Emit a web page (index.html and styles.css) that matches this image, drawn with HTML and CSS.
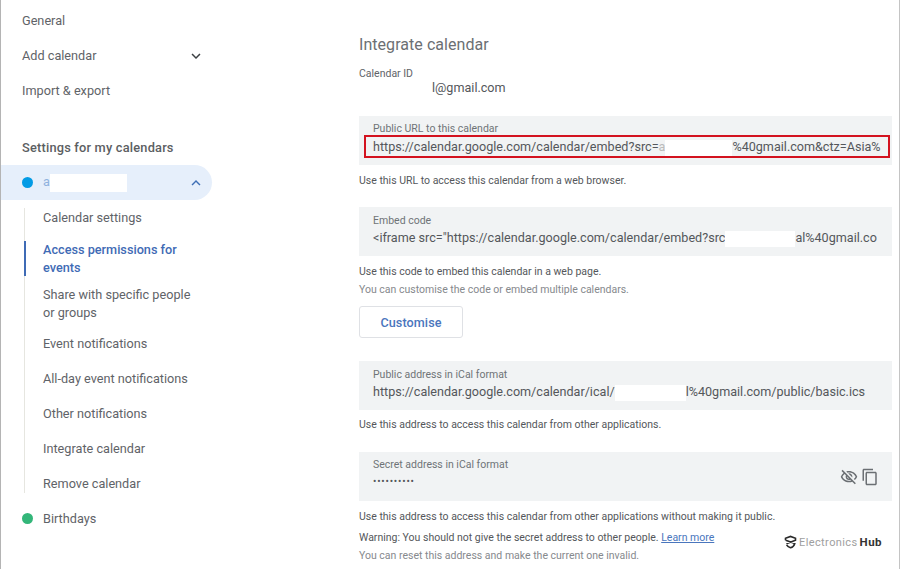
FILE: index.html
```html
<!DOCTYPE html>
<html lang="en">

<head>
    <meta charset="UTF-8">
    <title>Integrate calendar</title>
    <link rel="stylesheet" href="styles.css">
</head>

<body>
    <div id="box">
        <div class="side">
            <ul class="menu">
                <li>General</li>
                <li class="has_arrow">Add calendar
                    <svg class="arrow" viewBox="0 0 24 24"><path d="M7.4 8.6 12 13.2l4.6-4.6L18 10l-6 6-6-6z"/></svg>
                </li>
                <li>Import &amp; export</li>
            </ul>
            <p class="side_title">Settings for my calendars</p>
            <div class="cal_pill">
                <i class="dot blue"></i>
                <span class="cal_name">a<span class="hide hide_name"></span></span>
                <svg class="arrow up" viewBox="0 0 24 24"><path d="M7.4 15.4 12 10.8l4.6 4.6L18 14l-6-6-6 6z"/></svg>
            </div>
            <ul class="sub">
                <li>Calendar settings</li>
                <li class="two active">Access permissions for events</li>
                <li class="two">Share with specific people or groups</li>
                <li>Event notifications</li>
                <li>All-day event notifications</li>
                <li>Other notifications</li>
                <li>Integrate calendar</li>
                <li>Remove calendar</li>
            </ul>
            <div class="cal_row"><i class="dot green"></i><span>Birthdays</span></div>
        </div>

        <div class="main">
            <h2>Integrate calendar</h2>
            <p class="id_label">Calendar ID</p>
            <p class="id_value"><span class="hide hide_id"></span>l@gmail.com</p>

            <div class="field first">
                <p class="label">Public URL to this calendar</p>
                <p class="value marked">https://calendar.google.com/calendar/embed?src=<span class="fade">a</span><span class="hide hide_url"></span>%40gmail.com&amp;ctz=Asia%</p>
            </div>
            <p class="help">Use this URL to access this calendar from a web browser.</p>

            <div class="field">
                <p class="label">Embed code</p>
                <p class="value">&lt;iframe src="https://calendar.google.com/calendar/embed?src<span class="hide hide_embed"></span>al%40gmail.co</p>
            </div>
            <p class="help">Use this code to embed this calendar in a web page.</p>
            <p class="help grey">You can customise the code or embed multiple calendars.</p>
            <button class="btn">Customise</button>

            <div class="field ical">
                <p class="label">Public address in iCal format</p>
                <p class="value">https://calendar.google.com/calendar/ical/<span class="hide hide_ical"></span>l%40gmail.com/public/basic.ics</p>
            </div>
            <p class="help ical_help">Use this address to access this calendar from other applications.</p>

            <div class="field secret">
                <div class="secret_text">
                    <p class="label">Secret address in iCal format</p>
                    <p class="value dots">••••••••••</p>
                </div>
                <div class="tools">
                    <svg viewBox="0 0 24 24"><path d="M12 6c3.79 0 7.17 2.13 8.82 5.5-.59 1.22-1.42 2.27-2.41 3.12l1.41 1.41c1.39-1.23 2.49-2.77 3.18-4.53C21.27 7.11 17 4 12 4c-1.27 0-2.49.2-3.64.57l1.65 1.65C10.66 6.09 11.32 6 12 6zm-1.07 1.14L13 9.21c.57.25 1.03.71 1.28 1.28l2.07 2.07c.08-.34.14-.7.14-1.07C16.5 9.01 14.48 7 12 7c-.37 0-.72.05-1.07.14zM2.01 3.87l2.68 2.68C3.06 7.83 1.77 9.53 1 11.5 2.73 15.89 7 19 12 19c1.52 0 2.98-.29 4.32-.82l3.42 3.42 1.41-1.41L3.42 2.45 2.01 3.87zm7.5 7.5l2.61 2.61c-.04.01-.08.02-.12.02-1.38 0-2.5-1.12-2.5-2.5 0-.05.01-.08.01-.13zm-3.4-3.4l1.75 1.75c-.23.55-.36 1.15-.36 1.78 0 2.48 2.02 4.5 4.5 4.5.63 0 1.23-.13 1.77-.36l.98.98c-.88.24-1.8.38-2.75.38-3.79 0-7.17-2.13-8.82-5.5.7-1.43 1.72-2.61 2.93-3.53z"/></svg>
                    <svg viewBox="0 0 24 24"><path d="M16 1H4c-1.1 0-2 .9-2 2v14h2V3h12V1zm3 4H8c-1.1 0-2 .9-2 2v14c0 1.1.9 2 2 2h11c1.1 0 2-.9 2-2V7c0-1.1-.9-2-2-2zm0 16H8V7h11v14z"/></svg>
                </div>
            </div>
            <p class="help top">Use this address to access this calendar from other applications without making it public.</p>
            <p class="help warn">Warning: You should not give the secret address to other people. <a href="#">Learn more</a></p>
            <p class="help grey">You can reset this address and make the current one invalid.</p>
        </div>

        <div class="mark">
            <svg viewBox="0 0 14 14"><path d="M1.6 5.2V2.9L7 1l5.4 1.9V5L2.6 8.8M1.8 5 11.6 8.6C11 11 9.2 12.6 7 13.2 5 12.6 3.6 11.4 2.8 10" fill="none" stroke="#2a2a2a" stroke-width="1.7"/></svg>
            <span>Electronics</span> <b>Hub</b>
        </div>
    </div>
</body>

</html>
```

FILE: styles.css
```css
* {
    margin: 0;
    padding: 0;
    box-sizing: border-box;
}

html,
body {
    height: 100%;
    overflow: hidden;
}

body {
    background-color: #fff;
    font-family: Roboto, "Liberation Sans", sans-serif;
    color: #5f6368;
}

ul {
    list-style: none;
}

#box {
    position: relative;
    display: flex;
    height: 569px;
    border-left: 1px solid #b4b4b4;
    border-right: 1px solid #c4c4c4;
}

/* left column */
.side {
    width: 358px;
    flex-shrink: 0;
    padding-top: 3px;
    font-size: 12.7px;
}

.menu li {
    display: flex;
    align-items: center;
    justify-content: space-between;
    width: 211px;
    height: 35px;
    padding: 0 7px 0 21px;
}

.arrow {
    width: 18px;
    height: 18px;
    fill: #3c4043;
}

.arrow.up {
    fill: #3f6fb5;
}

.side_title {
    margin-top: 31px;
    padding-left: 21px;
    font-size: 12.8px;
    font-weight: 500;
    letter-spacing: .2px;
    line-height: 18px;
    color: #5b5e62;
}

.cal_pill,
.cal_row {
    display: flex;
    align-items: center;
    height: 35px;
    padding-left: 21px;
}

.cal_pill {
    width: 211px;
    margin-top: 8px;
    padding-right: 7px;
    border-radius: 0 18px 18px 0;
    background: #e6effb;
}

.cal_name {
    flex: 1;
    color: #8fb2de;
}

.dot {
    width: 11px;
    height: 11px;
    margin-right: 10px;
    border-radius: 50%;
}

.blue {
    background: #039be5;
}

.green {
    background: #33b679;
}

.hide {
    display: inline-block;
    vertical-align: middle;
    background: #fff;
}

.hide_name {
    width: 77px;
    height: 18px;
}

.sub {
    display: flex;
    flex-direction: column;
    margin: 8px 0 8px 23px;
    border-left: 1px solid #e6e6e0;
}

.sub li {
    display: flex;
    align-items: center;
    flex-shrink: 0;
    height: 35px;
    padding-left: 18px;
}

.sub li:first-child {
    margin-top: -8px;
}

.sub li:last-child {
    margin-bottom: -8px;
}

.sub li.two {
    width: 180px;
    line-height: 18px;
}

.sub li.active {
    margin: 6px 0 10px -1px;
    padding-left: 17px;
    border-left: 2px solid #3f6bb5;
    font-weight: 500;
    color: #3f6bb5;
}

.sub .active + .two {
    margin-bottom: 5px;
}

/* right column */
.main {
    width: 533px;
    padding-top: 35px;
}

h2 {
    font-size: 16px;
    font-weight: 400;
    line-height: 20px;
    letter-spacing: .05px;
    color: #6b6f73;
}

.id_label {
    margin-top: 12px;
    font-size: 10.5px;
    line-height: 14px;
    color: #5f6368;
}

.id_value {
    display: flex;
    align-items: center;
    font-size: 12.6px;
    line-height: 14px;
    color: #54575b;
}

.hide_id {
    width: 73px;
    height: 14px;
}

.field {
    height: 49px;
    margin-top: 19px;
    padding: 7px 14px 0;
    background: #f1f3f4;
}

.field.first {
    margin-top: 21px;
    padding-top: 6px;
}

.label {
    font-size: 10.5px;
    line-height: 13px;
    color: #6f7377;
}

.value {
    margin-top: 2px;
    font-size: 12.6px;
    line-height: 18px;
    white-space: nowrap;
    overflow: hidden;
    color: #54575b;
}

.marked {
    margin: 0 -12px 0 -9px;
    padding-left: 7px;
    height: 23px;
    line-height: 19px;
    border: 2px solid #d3121f;
}

.fade {
    color: #bbb;
}

.hide_url {
    width: 67px;
    height: 16px;
}

.hide_embed {
    width: 70px;
    height: 16px;
}

.hide_ical {
    width: 71px;
    height: 16px;
}

.help {
    margin-top: 4px;
    font-size: 10.5px;
    line-height: 14px;
    color: #54575b;
}

.field + .help {
    margin-top: 9px;
}

.field + .ical_help {
    margin-top: 8px;
}

.grey {
    color: #86898d;
}

.help a {
    color: #4a76bd;
}

.btn {
    display: block;
    width: 104px;
    height: 32px;
    margin-top: 9px;
    border: 1px solid #dfe1e5;
    border-radius: 3px;
    background: #fff;
    font-family: inherit;
    font-size: 12.6px;
    font-weight: 500;
    letter-spacing: .1px;
    color: #4a76bd;
}

.field.ical {
    margin-top: 23px;
}

.field.secret {
    display: flex;
    justify-content: space-between;
    align-items: center;
    padding-top: 0;
    margin-top: 20px;
}

.secret_text {
    padding-bottom: 4px;
}

.dots {
    font-size: 10px;
    letter-spacing: .8px;
}

.tools {
    display: flex;
    gap: 3px;
    margin-right: -1px;
}

.tools svg {
    width: 18px;
    height: 18px;
    fill: #6b6f73;
}

.warn {
    margin-top: 7px;
}

.mark {
    position: absolute;
    left: 783px;
    top: 535px;
    display: flex;
    align-items: center;
    gap: 2px;
    font-size: 11px;
    letter-spacing: .4px;
    color: #a0a0a0;
}

.mark svg {
    width: 13px;
    height: 14px;
}

.mark b {
    font-size: 11.5px;
    font-weight: 700;
    color: #333;
}
```
